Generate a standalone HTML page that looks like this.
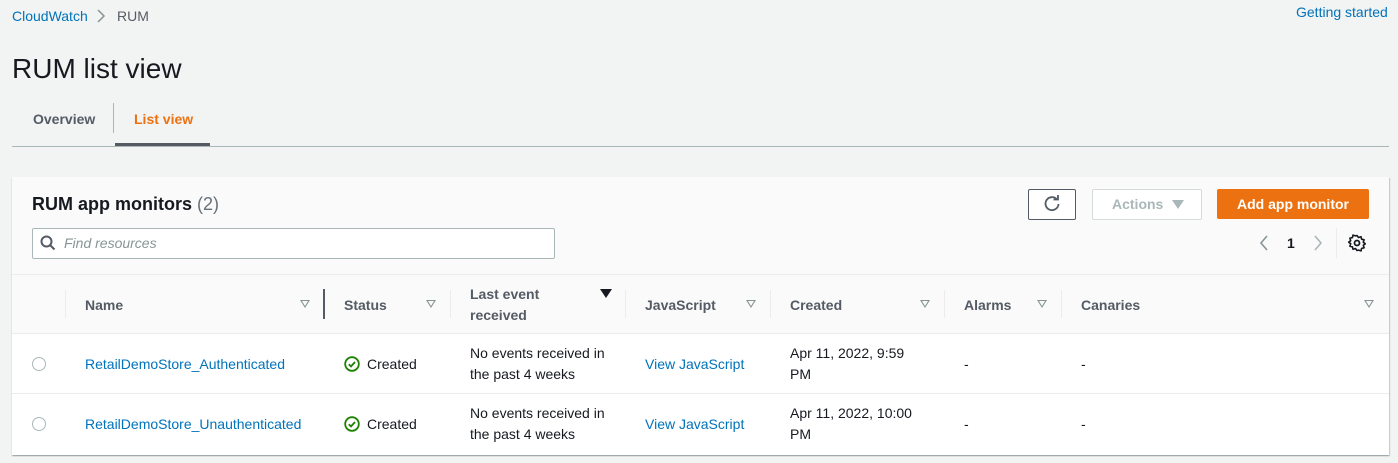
<!DOCTYPE html>
<html><head><style>
body{margin:0;width:1398px;height:463px;background:#f2f3f3;font-family:"Liberation Sans",sans-serif;color:#16191f;position:relative;overflow:hidden}
.a{position:absolute;white-space:nowrap}
.lnk{color:#0073bb}
.th{font-weight:bold;font-size:14px;color:#545b64}
.td{font-size:14px;line-height:21px}
.dv{position:absolute;width:1px;background:#eaeded}
.tri{position:absolute;width:0;height:0;border-left:5px solid transparent;border-right:5px solid transparent;border-top:8px solid #879596}
.tri:after{content:"";position:absolute;left:-3px;top:-7px;border-left:3px solid transparent;border-right:3px solid transparent;border-top:5px solid #fafafa}
.radio{position:absolute;width:12px;height:12px;border:1px solid #aab7b8;border-radius:50%;background:#fff}
</style></head><body>
<div class="a lnk" style="left:12px;top:8px;font-size:14px">CloudWatch</div>
<svg class="a" style="left:96px;top:9px" width="10" height="14" viewBox="0 0 10 14"><path d="M2 1l6 6-6 6" fill="none" stroke="#879596" stroke-width="1.5"/></svg>
<div class="a" style="left:117px;top:8px;font-size:14px;color:#545b64">RUM</div>
<div class="a lnk" style="left:1296px;top:4px;font-size:14px">Getting started</div>
<div class="a" style="left:12px;top:53px;font-size:28px">RUM list view</div>
<div class="a" style="left:33px;top:111px;font-size:14px;font-weight:bold;color:#545b64">Overview</div>
<div style="position:absolute;left:113px;top:103px;width:1px;height:30px;background:#aab7b8"></div>
<div class="a" style="left:134px;top:111px;font-size:14px;font-weight:bold;color:#ec7211">List view</div>
<div style="position:absolute;left:12px;top:146px;width:1377px;height:1px;background:#aab7b8"></div>
<div style="position:absolute;left:115px;top:143px;width:95px;height:3px;background:#545b64"></div>

<div style="position:absolute;left:12px;top:177px;width:1377px;height:278px;background:#fff;box-shadow:0 1px 1px rgba(0,28,36,.3),1px 1px 1px rgba(0,28,36,.15)">
 <div style="position:absolute;left:0;top:0;right:0;height:156px;background:#fafafa;border-bottom:1px solid #eaeded"></div>
 <div style="position:absolute;left:0;top:97px;right:0;height:1px;background:#eaeded"></div>
 <div style="position:absolute;left:0;top:216px;right:0;height:1px;background:#eaeded"></div>
</div>
<div class="a" style="left:32px;top:194px;font-size:18px;font-weight:bold">RUM app monitors <span style="font-weight:normal;color:#687078">(2)</span></div>
<div style="position:absolute;left:32px;top:228px;width:521px;height:29px;border:1px solid #aab7b8;border-radius:2px;background:#fff"></div>
<svg class="a" style="left:40px;top:235px" width="16" height="16" viewBox="0 0 16 16"><circle cx="6.5" cy="6.5" r="5" fill="none" stroke="#545b64" stroke-width="2"/><path d="M10 10l4.5 4.5" stroke="#545b64" stroke-width="2"/></svg>
<div class="a" style="left:64px;top:235px;font-size:14px;font-style:italic;color:#879596">Find resources</div>

<div style="position:absolute;left:1028px;top:189px;width:46px;height:29px;border:1px solid #545b64;border-radius:2px;background:#fff"></div>
<svg class="a" style="left:1043px;top:195px" width="18" height="18" viewBox="0 0 18 18"><path d="M14 4.5A6.5 6.5 0 1 0 15.5 9" fill="none" stroke="#545b64" stroke-width="1.8"/><path d="M10.5 4.5h4.5V0" fill="none" stroke="#545b64" stroke-width="1.8"/></svg>
<div style="position:absolute;left:1092px;top:189px;width:108px;height:29px;border:1px solid #d5dbdb;border-radius:2px;background:#fff"></div>
<div class="a" style="left:1112px;top:196px;font-size:14px;font-weight:bold;color:#aab7b8">Actions</div>
<div class="a" style="left:1172px;top:200px;border-left:6px solid transparent;border-right:6px solid transparent;border-top:9px solid #aab7b8;width:0;height:0"></div>
<div style="position:absolute;left:1217px;top:189px;width:152px;height:30px;background:#ec7211;border-radius:2px"></div>
<div class="a" style="left:1237px;top:196px;font-size:14px;font-weight:bold;color:#fff">Add app monitor</div>
<svg class="a" style="left:1258px;top:235px" width="12" height="16" viewBox="0 0 12 16"><path d="M9 1L3 8l6 7" fill="none" stroke="#879596" stroke-width="1.6"/></svg>
<div class="a" style="left:1287px;top:235px;font-size:14px;font-weight:bold">1</div>
<svg class="a" style="left:1312px;top:235px" width="12" height="16" viewBox="0 0 12 16"><path d="M3 1l6 7-6 7" fill="none" stroke="#aab7b8" stroke-width="1.6"/></svg>
<div class="dv" style="left:1336px;top:228px;height:30px"></div>
<svg class="a" style="left:1348px;top:234px" width="18" height="18" viewBox="0 0 18 18"><circle cx="9" cy="9" r="2.5" fill="none" stroke="#16191f" stroke-width="1.8"/><path d="M9 1.5l1.5 2 2.5-.8.6 2.5 2.5.6-.8 2.5 2 1.5-2 1.5.8 2.5-2.5.6-.6 2.5-2.5-.8L9 16.5l-1.5-2-2.5.8-.6-2.5-2.5-.6.8-2.5-2-1.5 2-1.5-.8-2.5 2.5-.6.6-2.5 2.5.8z" fill="none" stroke="#16191f" stroke-width="1.6" stroke-linejoin="round"/></svg>

<div class="dv" style="left:65px;top:290px;height:28px"></div>
<div class="a th" style="left:85px;top:297px">Name</div><div class="tri" style="left:300px;top:300px"></div>
<div style="position:absolute;left:323px;top:289px;width:2px;height:30px;background:#545b64"></div>
<div class="a th" style="left:344px;top:297px">Status</div><div class="tri" style="left:426px;top:300px"></div>
<div class="dv" style="left:450px;top:290px;height:28px"></div>
<div class="a th" style="left:470px;top:284px;line-height:21px">Last event<br>received</div>
<div class="a" style="left:600px;top:289px;border-left:6px solid transparent;border-right:6px solid transparent;border-top:9px solid #16191f;width:0;height:0"></div>
<div class="dv" style="left:625px;top:290px;height:28px"></div>
<div class="a th" style="left:645px;top:297px">JavaScript</div><div class="tri" style="left:746px;top:300px"></div>
<div class="dv" style="left:770px;top:290px;height:28px"></div>
<div class="a th" style="left:790px;top:297px">Created</div><div class="tri" style="left:920px;top:300px"></div>
<div class="dv" style="left:944px;top:290px;height:28px"></div>
<div class="a th" style="left:964px;top:297px">Alarms</div><div class="tri" style="left:1037px;top:300px"></div>
<div class="dv" style="left:1061px;top:290px;height:28px"></div>
<div class="a th" style="left:1081px;top:297px">Canaries</div><div class="tri" style="left:1364px;top:300px"></div>

<div class="radio" style="left:32px;top:357px"></div>
<div class="a td lnk" style="left:85px;top:354px">RetailDemoStore_Authenticated</div>
<svg class="a" style="left:344px;top:356px" width="16" height="16" viewBox="0 0 16 16"><circle cx="8" cy="8" r="6.8" fill="none" stroke="#1d8102" stroke-width="1.8"/><path d="M4.8 8.2l2.2 2.2 4-4.4" fill="none" stroke="#1d8102" stroke-width="1.8"/></svg>
<div class="a td" style="left:367px;top:354px">Created</div>
<div class="a td" style="left:470px;top:343px">No events received in<br>the past 4 weeks</div>
<div class="a td lnk" style="left:645px;top:354px">View JavaScript</div>
<div class="a td" style="left:790px;top:343px">Apr 11, 2022, 9:59<br>PM</div>
<div class="a td" style="left:964px;top:354px">-</div>
<div class="a td" style="left:1081px;top:354px">-</div>

<div class="radio" style="left:32px;top:417px"></div>
<div class="a td lnk" style="left:85px;top:414px">RetailDemoStore_Unauthenticated</div>
<svg class="a" style="left:344px;top:416px" width="16" height="16" viewBox="0 0 16 16"><circle cx="8" cy="8" r="6.8" fill="none" stroke="#1d8102" stroke-width="1.8"/><path d="M4.8 8.2l2.2 2.2 4-4.4" fill="none" stroke="#1d8102" stroke-width="1.8"/></svg>
<div class="a td" style="left:367px;top:414px">Created</div>
<div class="a td" style="left:470px;top:403px">No events received in<br>the past 4 weeks</div>
<div class="a td lnk" style="left:645px;top:414px">View JavaScript</div>
<div class="a td" style="left:790px;top:403px">Apr 11, 2022, 10:00<br>PM</div>
<div class="a td" style="left:964px;top:414px">-</div>
<div class="a td" style="left:1081px;top:414px">-</div>
</body></html>
